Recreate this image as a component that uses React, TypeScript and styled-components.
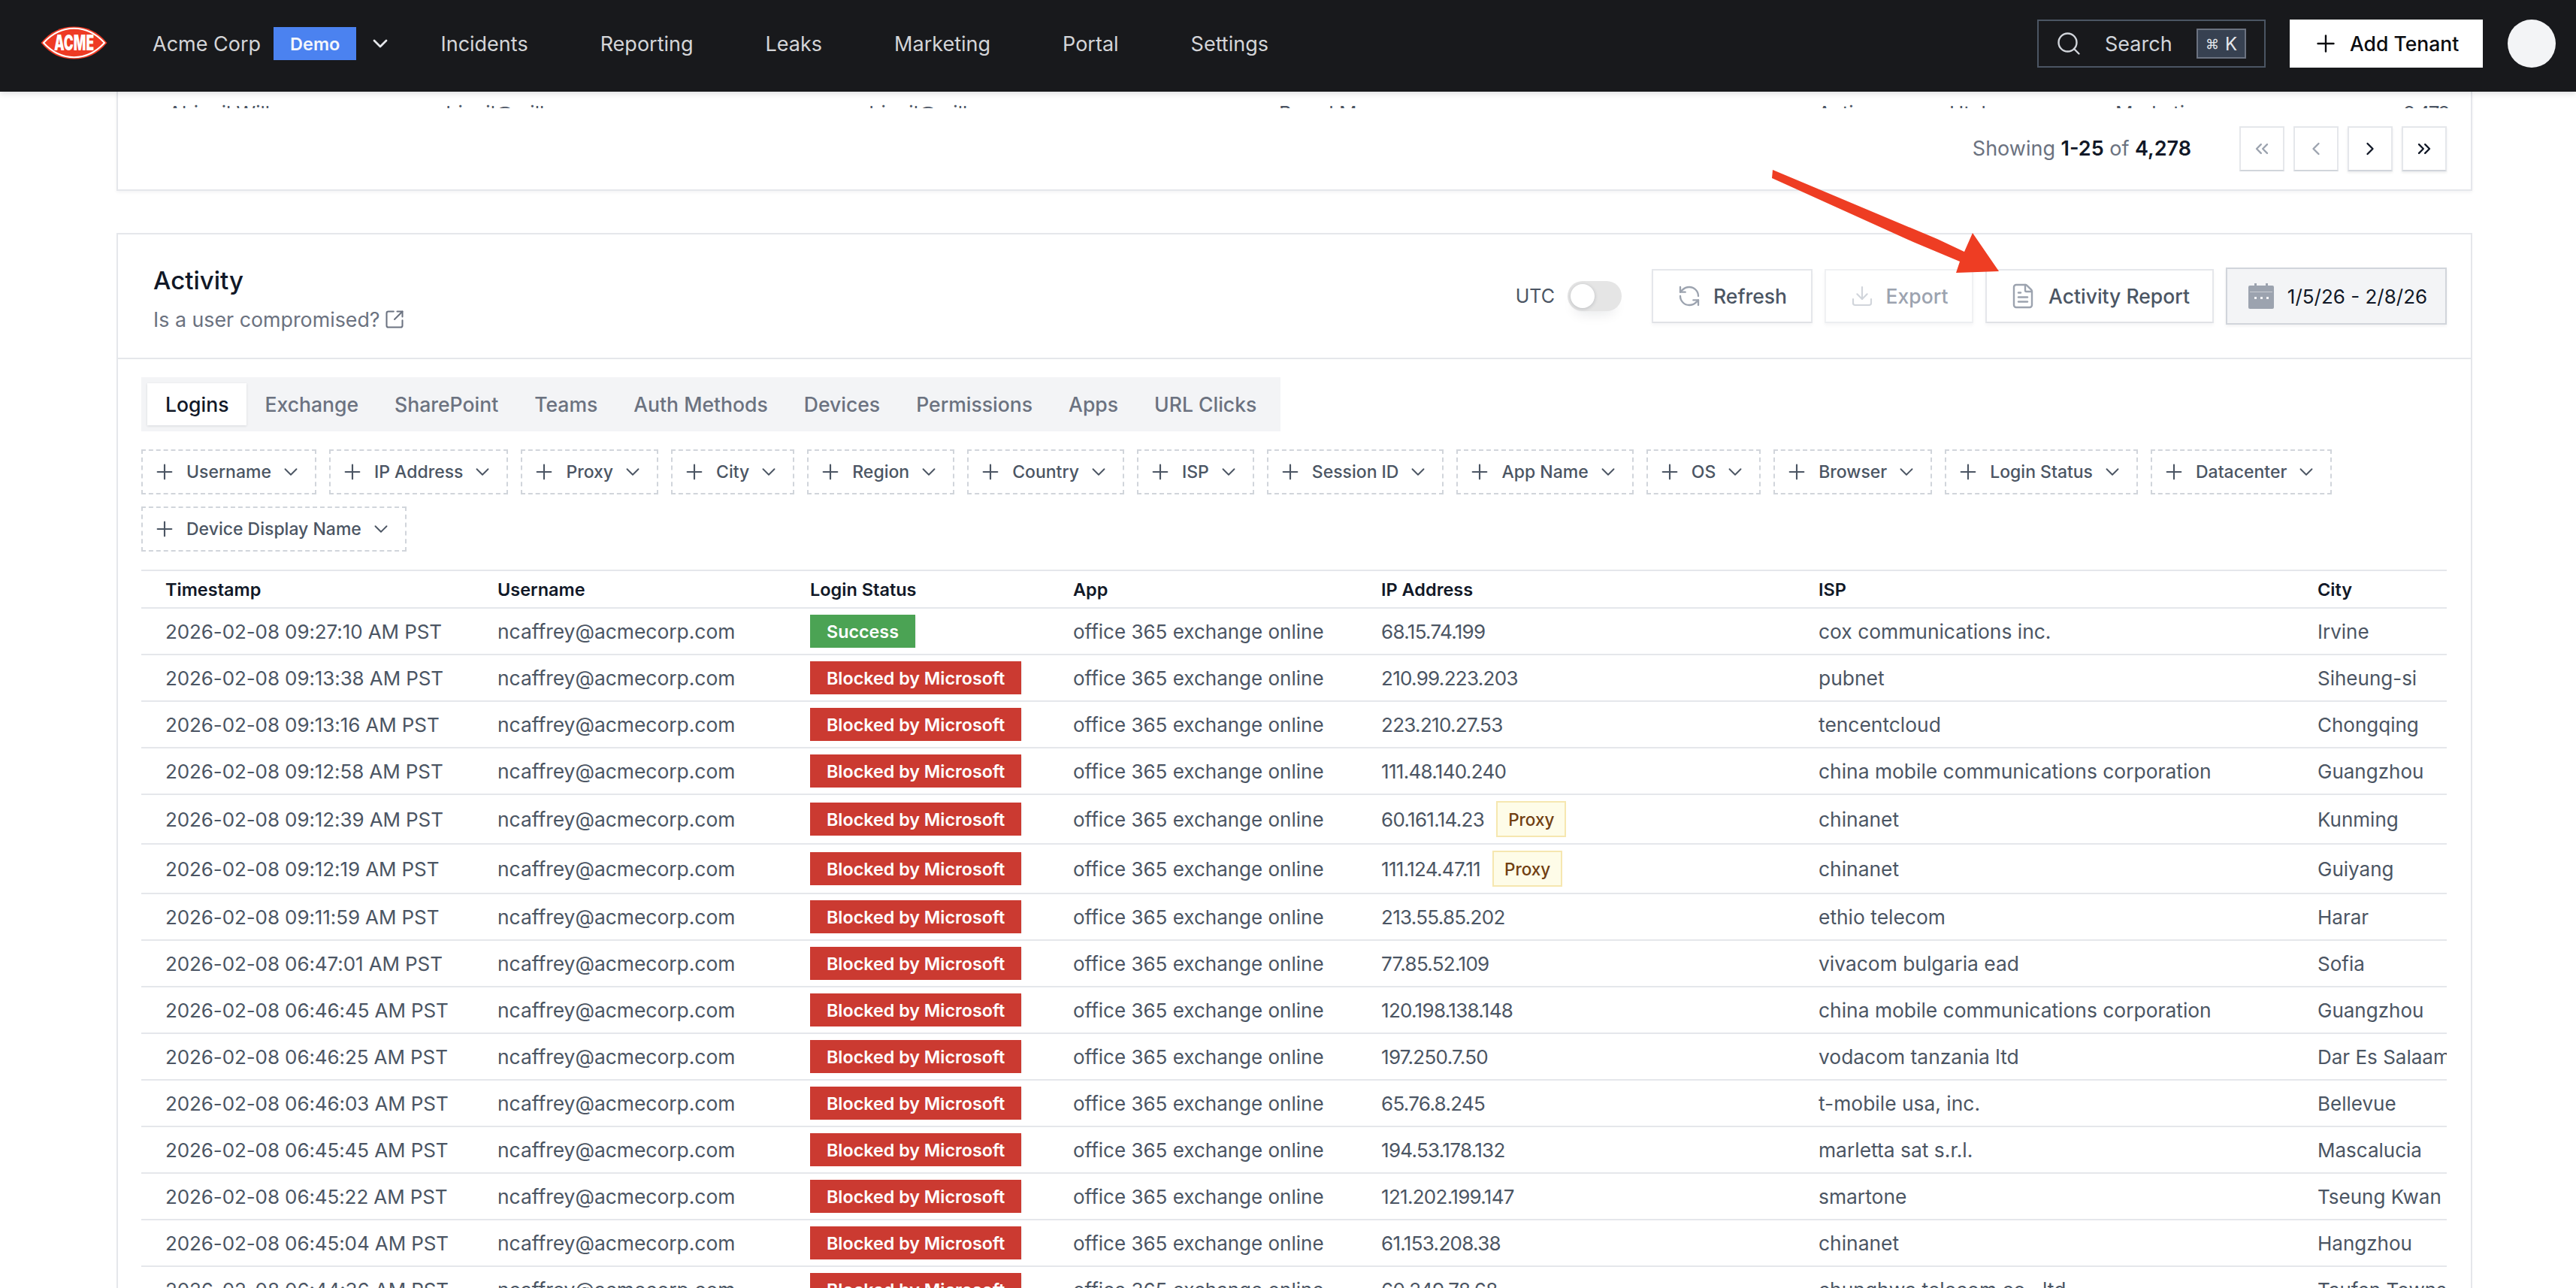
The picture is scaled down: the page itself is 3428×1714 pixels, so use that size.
import React from 'react';
import styled, { createGlobalStyle } from 'styled-components';
import { Search, Plus, ChevronDown, ChevronLeft, ChevronRight, ChevronsLeft, ChevronsRight, SquareArrowOutUpRight, RefreshCcw, Download, FileText } from 'lucide-react';

const GlobalStyle = createGlobalStyle`
  html, body {
    margin: 0;
    padding: 0;
    height: 100%;
    overflow: hidden;
    background: #fff;
    font-family: Inter, "Liberation Sans", sans-serif;
  }
  * { box-sizing: border-box; }
`;

const Page = styled.div`
  position: relative;
  width: 3428px;
  height: 1714px;
  overflow: hidden;
  background: #fff;
`;

const Header = styled.header`
  position: relative;
  z-index: 5;
  height: 122px;
  background: #18191c;
  box-shadow: 0 2px 8px rgba(17, 24, 39, 0.15);
  display: flex;
  align-items: center;
  padding: 0 27px 6px 54px;
`;

const Logo = styled.svg`
  width: 89px;
  height: 44px;
  margin-right: 60px;
  margin-top: -2px;
`;

const TenantName = styled.span`
  font-size: 27px;
  color: #d4d5d8;
  margin-right: 17px;
`;

const DemoBadge = styled.span`
  height: 44px;
  padding: 0 22px;
  display: flex;
  align-items: center;
  background: #4b82f0;
  color: #f4f6fb;
  font-size: 23.5px;
  font-weight: 600;
`;

const TenantChevron = styled(ChevronDown)`
  color: #e5e7eb;
  margin-left: 16px;
  margin-right: 64px;
`;

const NavLink = styled.a`
  font-size: 27px;
  color: #d4d5d8;
  margin-right: 96px;
`;

const HeaderRight = styled.div`
  margin-left: auto;
  display: flex;
  align-items: center;
`;

const SearchBox = styled.div`
  width: 304px;
  height: 64px;
  border: 2px solid #4b5563;
  display: flex;
  align-items: center;
  padding: 0 24px 0 22px;
  color: #d1d5db;
  font-size: 27px;
  margin-right: 32px;
`;

const SearchLabel = styled.span`
  margin-left: 30px;
`;

const KeyHint = styled.span`
  margin-left: auto;
  width: 66px;
  height: 40px;
  background: #374151;
  border: 2px solid #6b7280;
  display: flex;
  align-items: center;
  justify-content: center;
  gap: 8px;
  color: #e5e7eb;
  font-size: 24px;
`;

const KeyGlyph = styled.span`
  font-size: 18px;
`;

const AddTenant = styled.button`
  width: 257px;
  height: 64px;
  background: #fff;
  border: 0;
  padding: 0 0 0 30px;
  display: flex;
  align-items: center;
  gap: 14px;
  color: #0b0c10;
  font: 500 26.5px Inter, sans-serif;
`;

const Avatar = styled.div`
  width: 64px;
  height: 64px;
  margin-left: 33px;
  border-radius: 50%;
  background: #f3f4f6;
`;

const Content = styled.main`
  padding: 0 138px 0 155px;
`;

const TopCard = styled.section`
  height: 132px;
  border: 2px solid #e5e7eb;
  border-top: 0;
  box-shadow: 0 2px 4px rgba(17, 24, 39, 0.05);
  position: relative;
  overflow: hidden;
  display: flex;
  align-items: flex-start;
  justify-content: flex-end;
  padding: 46px 32px 0 0;
`;

const ClippedRow = styled.div`
  position: absolute;
  left: 0;
  right: 0;
  top: 0;
  height: 22px;
  overflow: hidden;
`;

const ClippedText = styled.span<{ left: number }>`
  position: absolute;
  left: ${(p) => p.left}px;
  top: 12px;
  font-size: 26px;
  line-height: 34px;
  color: #4b5563;
  white-space: nowrap;
`;

const ClippedCount = styled(ClippedText)`
  letter-spacing: -2px;
`;

const Showing = styled.div`
  font-size: 27px;
  color: #6b7280;
  margin-right: 64px;
  line-height: 60px;
  b {
    color: #111827;
    font-weight: 600;
  }
`;

const PageButtons = styled.div`
  display: flex;
  gap: 12px;
`;

const PageButton = styled.button<{ muted?: boolean }>`
  width: 60px;
  height: 60px;
  background: #fff;
  border: 2px solid #e5e7eb;
  border-bottom-color: #d1d5db;
  padding: 0;
  display: flex;
  align-items: center;
  justify-content: center;
  color: ${(p) => (p.muted ? '#9ca3af' : '#111827')};
  box-shadow: ${(p) => (p.muted ? 'none' : '0 2px 3px rgba(17,24,39,.08)')};
`;

const ActivityCard = styled.section`
  margin-top: 56px;
  border: 2px solid #e5e7eb;
  height: 1500px;
`;

const CardHead = styled.div`
  height: 166px;
  border-bottom: 2px solid #e5e7eb;
  display: flex;
  align-items: center;
  justify-content: space-between;
  padding: 0 32px 0 47px;
`;

const TitleBlock = styled.div`
  margin-top: 4px;
`;

const Title = styled.h2`
  margin: 0;
  font-size: 33px;
  line-height: 44px;
  font-weight: 500;
  color: #111827;
`;

const Subtitle = styled.div`
  display: flex;
  align-items: center;
  gap: 5px;
  margin-top: 14px;
  font-size: 26.8px;
  color: #6b7280;
`;

const Actions = styled.div`
  display: flex;
  align-items: center;
`;

const UtcLabel = styled.span`
  font-size: 25px;
  color: #4b5563;
`;

const Switch = styled.span`
  width: 72px;
  height: 40px;
  margin: 0 40px 0 17px;
  background: #e5e5e5;
  border-radius: 20px;
  display: flex;
  align-items: center;
  padding: 4px;
  box-shadow: 0 12px 18px -10px rgba(17, 24, 39, 0.12);
  &::before {
    content: '';
    width: 32px;
    height: 32px;
    background: #fff;
    border-radius: 50%;
    box-shadow: 0 1px 5px rgba(17, 24, 39, 0.2);
  }
`;

const ActionButton = styled.button<{ disabled?: boolean; wide: number }>`
  width: ${(p) => p.wide}px;
  height: 72px;
  background: #fff;
  border: 2px solid ${(p) => (p.disabled ? '#f0f1f3' : '#e5e7eb')};
  border-bottom-color: ${(p) => (p.disabled ? '#eceef1' : '#e0e2e6')};
  padding: 0;
  display: flex;
  align-items: center;
  justify-content: center;
  gap: 16px;
  font: 500 26.5px Inter, sans-serif;
  color: ${(p) => (p.disabled ? '#9ca3af' : '#4b5563')};
  margin-right: 16px;
  box-shadow: 0 3px 4px rgba(17, 24, 39, 0.04);
  svg {
    color: ${(p) => (p.disabled ? '#d1d5db' : '#9ca3af')};
  }
`;

const DateButton = styled.button`
  width: 294px;
  height: 76px;
  background: #f3f4f6;
  border: 2px solid #d1d5db;
  padding: 0 0 0 4px;
  display: flex;
  align-items: center;
  justify-content: center;
  gap: 18px;
  font: 400 26px Inter, sans-serif;
  color: #111827;
  box-shadow: 0 2px 4px rgba(17, 24, 39, 0.06);
`;

const CardBody = styled.div`
  padding: 24px 0 0 31px;
  margin-right: 32px;
`;

const Tabs = styled.div`
  display: flex;
  width: fit-content;
  height: 72px;
  background: #f3f4f6;
  align-items: center;
  padding: 0 8px;
`;

const Tab = styled.span<{ active?: boolean }>`
  height: 56px;
  display: flex;
  align-items: center;
  padding: 0 24px;
  font-size: 26.55px;
  font-weight: 500;
  color: ${(p) => (p.active ? '#111827' : '#6b7280')};
  background: ${(p) => (p.active ? '#fff' : 'transparent')};
  box-shadow: ${(p) => (p.active ? '0 1px 3px rgba(17,24,39,.12)' : 'none')};
`;

const Filters = styled.div`
  display: flex;
  flex-wrap: wrap;
  gap: 16px 17px;
  margin-top: 24px;
`;

const FilterChip = styled.span`
  height: 60px;
  border: 2px dashed #d1d5db;
  display: flex;
  align-items: center;
  padding: 0 17px 0 13px;
  font-size: 23px;
  font-weight: 500;
  color: #4b5563;
`;

const ChipLabel = styled.span`
  margin: 0 11px 0 13px;
`;

const TableWrap = styled.div`
  margin-top: 24px;
  border-top: 2px solid #e5e7eb;
  overflow: hidden;
`;

const RowGrid = styled.div<{ tall?: boolean; head?: boolean }>`
  display: grid;
  grid-template-columns: 442px 416px 350px 410px 582px 664px 300px;
  height: ${(p) => (p.head ? 50 : p.tall ? 66 : 62)}px;
  border-bottom: 2px solid #e5e7eb;
  align-items: center;
  padding-left: 32px;
  font-size: ${(p) => (p.head ? 23.5 : 26)}px;
  color: ${(p) => (p.head ? '#111827' : '#4b5563')};
  font-weight: ${(p) => (p.head ? 600 : 400)};
  white-space: nowrap;
`;

const Cell = styled.span`
  display: flex;
  align-items: center;
  overflow: hidden;
`;

const TimeCell = styled(Cell)`
  letter-spacing: -0.1px;
`;

const IpCell = styled(Cell)`
  letter-spacing: -0.7px;
`;

const IspCell = styled(Cell)`
  font-size: 26.4px;
`;

const StatusBadge = styled.span<{ ok?: boolean }>`
  height: 44px;
  padding: 0 22px;
  display: inline-flex;
  align-items: center;
  background: ${(p) => (p.ok ? '#4ba354' : '#cb3a31')};
  color: #fff;
  font-size: 23.3px;
  font-weight: 600;
  box-shadow: 0 2px 3px rgba(17, 24, 39, 0.15);
`;

const ProxyBadge = styled.span`
  height: 48px;
  margin-left: 16px;
  padding: 0 14px;
  display: inline-flex;
  align-items: center;
  background: #fefce8;
  border: 2px solid #f6e7b0;
  color: #713f12;
  font-size: 22.5px;
  font-weight: 500;
  letter-spacing: 0;
`;

const Arrow = styled.svg`
  position: absolute;
  left: 2340px;
  top: 222px;
  width: 340px;
  height: 150px;
  z-index: 4;
`;

const FILTERS = ['Username', 'IP Address', 'Proxy', 'City', 'Region', 'Country', 'ISP', 'Session ID', 'App Name', 'OS', 'Browser', 'Login Status', 'Datacenter', 'Device Display Name'];
const TABS = ['Logins', 'Exchange', 'SharePoint', 'Teams', 'Auth Methods', 'Devices', 'Permissions', 'Apps', 'URL Clicks'];
const NAV = ['Incidents', 'Reporting', 'Leaks', 'Marketing', 'Portal', 'Settings'];

const ROWS: [string, string, string, string, boolean?][] = [
  ['2026-02-08 09:27:10 AM PST', '68.15.74.199', 'cox communications inc.', 'Irvine'],
  ['2026-02-08 09:13:38 AM PST', '210.99.223.203', 'pubnet', 'Siheung-si'],
  ['2026-02-08 09:13:16 AM PST', '223.210.27.53', 'tencentcloud', 'Chongqing'],
  ['2026-02-08 09:12:58 AM PST', '111.48.140.240', 'china mobile communications corporation', 'Guangzhou'],
  ['2026-02-08 09:12:39 AM PST', '60.161.14.23', 'chinanet', 'Kunming', true],
  ['2026-02-08 09:12:19 AM PST', '111.124.47.11', 'chinanet', 'Guiyang', true],
  ['2026-02-08 09:11:59 AM PST', '213.55.85.202', 'ethio telecom', 'Harar'],
  ['2026-02-08 06:47:01 AM PST', '77.85.52.109', 'vivacom bulgaria ead', 'Sofia'],
  ['2026-02-08 06:46:45 AM PST', '120.198.138.148', 'china mobile communications corporation', 'Guangzhou'],
  ['2026-02-08 06:46:25 AM PST', '197.250.7.50', 'vodacom tanzania ltd', 'Dar Es Salaam'],
  ['2026-02-08 06:46:03 AM PST', '65.76.8.245', 't-mobile usa, inc.', 'Bellevue'],
  ['2026-02-08 06:45:45 AM PST', '194.53.178.132', 'marletta sat s.r.l.', 'Mascalucia'],
  ['2026-02-08 06:45:22 AM PST', '121.202.199.147', 'smartone', 'Tseung Kwan O'],
  ['2026-02-08 06:45:04 AM PST', '61.153.208.38', 'chinanet', 'Hangzhou'],
  ['2026-02-08 06:44:36 AM PST', '60.249.78.68', 'chunghwa telecom co., ltd.', 'Taufen Towns'],
];

function CalendarIcon() {
  return (
    <svg width="34" height="34" viewBox="0 0 34 34">
      <path d="M8 0h3v5H8zM23 0h3v5h-3z" fill="#9ca3af" />
      <rect x="0" y="3" width="34" height="31" rx="2" fill="#9ca3af" />
      <path d="M2 11h30v1H2z" fill="#c9ccd3" />
      <path d="M8 18h3v3H8zM16 18h3v3h-3zM24 18h3v3h-3z" fill="#f3f4f6" />
    </svg>
  );
}

export default function App() {
  return (
    <Page>
      <GlobalStyle />
      <Header>
        <Logo viewBox="0 0 89 44">
          <path d="M0.5 22C13 7 27 0.5 44.5 0.5S76 7 88.5 22C76 37 62 43.5 44.5 43.5S13 37 0.5 22z" fill="#ee3b24" />
          <path d="M4 22C16 9 29 2.8 44.5 2.8S73 9 85 22C73 35 60 41.2 44.5 41.2S16 35 4 22z" fill="none" stroke="#fff" strokeWidth="2" />
          <text transform="translate(44.5 32) scale(0.62 1)" textAnchor="middle" fontFamily="Inter, sans-serif" fontWeight="900" fontSize="28" fill="#fff">ACME</text>
        </Logo>
        <TenantName>Acme Corp</TenantName>
        <DemoBadge>Demo</DemoBadge>
        <TenantChevron size={32} />
        {NAV.map((n) => (
          <NavLink key={n}>{n}</NavLink>
        ))}
        <HeaderRight>
          <SearchBox>
            <Search size={36} strokeWidth={1.6} />
            <SearchLabel>Search</SearchLabel>
            <KeyHint><KeyGlyph>⌘</KeyGlyph>K</KeyHint>
          </SearchBox>
          <AddTenant>
            <Plus size={36} strokeWidth={1.6} />
            Add Tenant
          </AddTenant>
          <Avatar />
        </HeaderRight>
      </Header>
      <Content>
        <TopCard>
          <ClippedRow>
            <ClippedText left={67}>Abigail Wills</ClippedText>
            <ClippedText left={422}>abigail@wills</ClippedText>
            <ClippedText left={985}>abigail@wills</ClippedText>
            <ClippedText left={1545}>Brand Mgr</ClippedText>
            <ClippedText left={2262}>Active</ClippedText>
            <ClippedText left={2437}>Utah</ClippedText>
            <ClippedText left={2658}>Marketing</ClippedText>
            <ClippedCount left={3041}>8,478</ClippedCount>
          </ClippedRow>
          <Showing>
            Showing <b>1-25</b> of <b>4,278</b>
          </Showing>
          <PageButtons>
            <PageButton muted><ChevronsLeft size={28} /></PageButton>
            <PageButton muted><ChevronLeft size={28} /></PageButton>
            <PageButton><ChevronRight size={28} /></PageButton>
            <PageButton><ChevronsRight size={28} /></PageButton>
          </PageButtons>
        </TopCard>
        <ActivityCard>
          <CardHead>
            <TitleBlock>
              <Title>Activity</Title>
              <Subtitle>
                Is a user compromised?
                <SquareArrowOutUpRight size={28} strokeWidth={1.75} />
              </Subtitle>
            </TitleBlock>
            <Actions>
              <UtcLabel>UTC</UtcLabel>
              <Switch />
              <ActionButton wide={214}><RefreshCcw size={32} strokeWidth={1.75} />Refresh</ActionButton>
              <ActionButton wide={198} disabled><Download size={32} strokeWidth={1.6} />Export</ActionButton>
              <ActionButton wide={304}><FileText size={36} strokeWidth={1.6} />Activity Report</ActionButton>
              <DateButton><CalendarIcon />1/5/26 - 2/8/26</DateButton>
            </Actions>
          </CardHead>
          <CardBody>
            <Tabs>
              {TABS.map((t, i) => (
                <Tab key={t} active={i === 0}>{t}</Tab>
              ))}
            </Tabs>
            <Filters>
              {FILTERS.map((f) => (
                <FilterChip key={f}>
                  <Plus size={32} strokeWidth={1.6} />
                  <ChipLabel>{f}</ChipLabel>
                  <ChevronDown size={30} strokeWidth={1.5} />
                </FilterChip>
              ))}
            </Filters>
            <TableWrap>
              <RowGrid head>
                <Cell>Timestamp</Cell>
                <Cell>Username</Cell>
                <Cell>Login Status</Cell>
                <Cell>App</Cell>
                <Cell>IP Address</Cell>
                <Cell>ISP</Cell>
                <Cell>City</Cell>
              </RowGrid>
              {ROWS.map(([ts, ip, isp, city, proxy], i) => (
                <RowGrid key={ts} tall={proxy}>
                  <TimeCell>{ts}</TimeCell>
                  <IspCell>ncaffrey@acmecorp.com</IspCell>
                  <Cell><StatusBadge ok={i === 0}>{i === 0 ? 'Success' : 'Blocked by Microsoft'}</StatusBadge></Cell>
                  <Cell>office 365 exchange online</Cell>
                  <IpCell>{ip}{proxy && <ProxyBadge>Proxy</ProxyBadge>}</IpCell>
                  <IspCell>{isp}</IspCell>
                  <Cell>{city}</Cell>
                </RowGrid>
              ))}
            </TableWrap>
          </CardBody>
        </ActivityCard>
      </Content>
      <Arrow viewBox="0 0 340 150">
        <path d="M19 4L238 96L274 113L285 88L320 139L263 141L268 126L206 100L18 15z" fill="#ee3d23" />
      </Arrow>
    </Page>
  );
}
